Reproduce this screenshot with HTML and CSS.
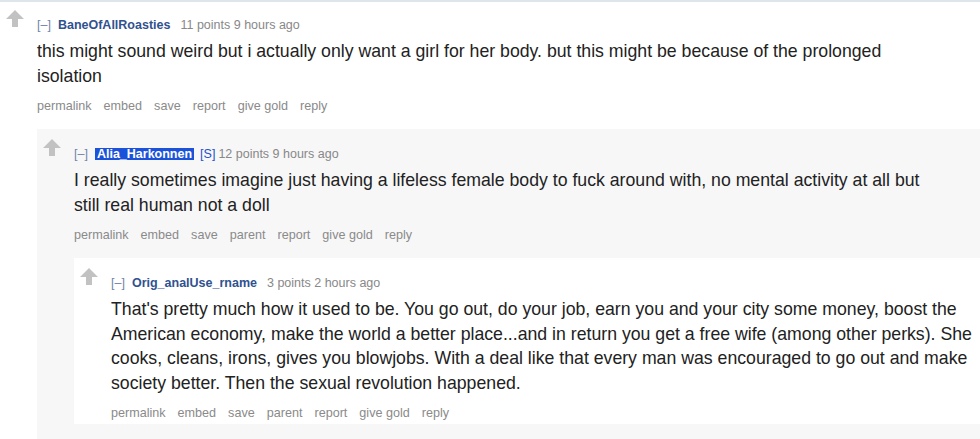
FILE: index.html
```html
<!DOCTYPE html>
<html>
<head>
<meta charset="utf-8">
<link rel="stylesheet" href="styles.css">
</head>
<body>
<div class="topline"></div>
<div class="comment first">
  <div class="midcol">
    <svg class="arrow" viewBox="0 0 18 17"><polygon points="9,0 18,9 12,9 12,17 6,17 6,9 0,9"/></svg>
  </div>
  <div class="entry">
    <p class="tagline"><span class="expand">[–]</span><a class="author">BaneOfAllRoasties</a><span class="score">11 points 9 hours ago</span></p>
    <div class="md">this might sound weird but i actually only want a girl for her body. but this might be because of the prolonged isolation</div>
    <ul class="buttons"><li>permalink</li><li>embed</li><li>save</li><li>report</li><li>give gold</li><li>reply</li></ul>
    <div class="child">
      <div class="comment odd">
        <div class="midcol">
          <svg class="arrow" viewBox="0 0 18 17"><polygon points="9,0 18,9 12,9 12,17 6,17 6,9 0,9"/></svg>
        </div>
        <div class="entry">
          <p class="tagline"><span class="expand">[–]</span><a class="author submitter">Alia_Harkonnen</a><span class="flag">[S]</span><span class="score">12 points 9 hours ago</span></p>
          <div class="md">I really sometimes imagine just having a lifeless female body to fuck around with, no mental activity at all but still real human not a doll</div>
          <ul class="buttons"><li>permalink</li><li>embed</li><li>save</li><li>parent</li><li>report</li><li>give gold</li><li>reply</li></ul>
          <div class="child">
            <div class="comment even">
              <div class="midcol">
                <svg class="arrow" viewBox="0 0 18 17"><polygon points="9,0 18,9 12,9 12,17 6,17 6,9 0,9"/></svg>
              </div>
              <div class="entry">
                <p class="tagline"><span class="expand">[–]</span><a class="author">Orig_analUse_rname</a><span class="score">3 points 2 hours ago</span></p>
                <div class="md">That's pretty much how it used to be. You go out, do your job, earn you and your city some money, boost the American economy, make the world a better place...and in return you get a free wife (among other perks). She cooks, cleans, irons, gives you blowjobs. With a deal like that every man was encouraged to go out and make society better. Then the sexual revolution happened.</div>
                <ul class="buttons"><li>permalink</li><li>embed</li><li>save</li><li>parent</li><li>report</li><li>give gold</li><li>reply</li></ul>
              </div>
            </div>
          </div>
        </div>
      </div>
    </div>
  </div>
</div>
</body>
</html>
```

FILE: styles.css
```css
html, body {
  margin: 0;
  padding: 0;
  background: #fff;
  font-family: "Liberation Sans", Arial, sans-serif;
  color: #222;
}
.topline {
  height: 2px;
  background: #dfe5ed;
}
.comment {
  display: flex;
  padding-top: 10px;
}
.comment.first {
  padding-top: 8px;
}
.comment.odd {
  background: #f7f7f8;
  padding-bottom: 30px;
}
.comment.even {
  background: #fff;
  padding-bottom: 3px;
}
.midcol {
  flex: none;
  width: 37px;
}
.arrow {
  display: block;
  width: 18px;
  height: 17px;
  margin-left: 6px;
  fill: #c2c2c2;
}
.entry {
  flex: 1;
  min-width: 0;
}
.tagline {
  margin: 7px 0 0;
  font-size: 12.5px;
  line-height: 16px;
  color: #888;
  display: flex;
  align-items: center;
}
.expand {
  color: #6f83ab;
  margin-right: 7px;
}
.author {
  color: #30528f;
  font-weight: bold;
  margin-right: 10px;
}
.author.submitter {
  background: #1b52d9;
  color: #fff;
  padding: 0 2px;
  line-height: 12px;
  margin-right: 6px;
}
.flag {
  color: #2451c9;
  margin-right: 3px;
}
.md {
  margin-top: 6px;
  font-size: 17.7px;
  line-height: 24.5px;
  max-width: 865px;
  color: #222;
}
.buttons {
  list-style: none;
  margin: 10px 0 0;
  padding: 0;
  display: flex;
  gap: 12px;
  font-size: 12.6px;
  line-height: 16px;
  color: #8a8a8a;
}
.child {
  margin-top: 15px;
}
```
